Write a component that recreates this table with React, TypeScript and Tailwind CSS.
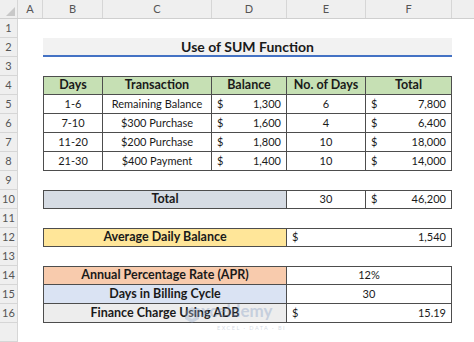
import React from "react";

type Cell = {
  text?: string;
  dollar?: string;
  w: number;
  bold?: boolean;
  bg?: string;
};

const font = { fontFamily: "Lato, 'Liberation Sans', sans-serif" };

const RowNum = ({ n }: { n?: number }) => (
  <div className="w-[18px] shrink-0 bg-[#efefef] border-r border-b border-[#d6d6d6] flex items-center justify-center text-[11px] text-[#555]">
    {n}
  </div>
);

const TableCell = ({ cell, first, top }: { cell: Cell; first?: boolean; top?: boolean }) => (
  <div
    className={`shrink-0 h-full flex items-center border-r border-b border-[#4d4d4d] text-[#1a1a1a] ${
      first ? "border-l" : ""
    } ${top ? "border-t" : ""} ${cell.bold ? "font-bold text-[12.5px]" : "text-[11px]"} ${
      cell.dollar ? "justify-between px-[5px]" : "justify-center"
    } ${cell.bg ?? "bg-white"}`}
    style={{ width: cell.w }}
  >
    {cell.dollar ? (
      <>
        <span>$</span>
        <span>{cell.dollar}</span>
      </>
    ) : (
      <span>{cell.text}</span>
    )}
  </div>
);

const Row = ({ n, cells, top }: { n?: number; cells?: Cell[]; top?: boolean }) => (
  <div className="flex h-[19px]">
    <RowNum n={n} />
    <div className="w-[25px] shrink-0" />
    {cells?.map((c, i) => (
      <TableCell key={i} cell={c} first={i === 0} top={top} />
    ))}
  </div>
);

const green = "bg-[#c6e0b4]";

const data = [
  ["1-6", "Remaining Balance", "1,300", "6", "7,800"],
  ["7-10", "$300 Purchase", "1,600", "4", "6,400"],
  ["11-20", "$200 Purchase", "1,800", "10", "18,000"],
  ["21-30", "$400 Payment", "1,400", "10", "14,000"],
];

const summary = [
  { label: "Annual Percentage Rate (APR)", bg: "bg-[#f8cbad]", value: { text: "12%" } },
  { label: "Days in Billing Cycle", bg: "bg-[#dae3f3]", value: { text: "30" } },
  { label: "Finance Charge Using ADB", bg: "bg-[#ededed]", value: { dollar: "15.19" } },
];

export default function App() {
  const colHeads = [
    { l: "A", w: 25 },
    { l: "B", w: 60 },
    { l: "C", w: 109 },
    { l: "D", w: 75 },
    { l: "E", w: 79 },
    { l: "F", w: 86 },
  ];

  return (
    <div className="relative w-[474px] h-[342px] overflow-hidden bg-white" style={font}>
      {/* column headers */}
      <div className="flex h-[19px] bg-[#efefef] border-b border-[#cfcfcf] text-[11px] text-[#555]">
        <div className="w-[18px] shrink-0 border-r border-[#d6d6d6] relative">
          <svg className="absolute right-[2px] bottom-[2px]" width="9" height="9" viewBox="0 0 9 9">
            <polygon points="9,0 9,9 0,9" fill="#c8c8c8" />
          </svg>
        </div>
        {colHeads.map((c) => (
          <div
            key={c.l}
            className="shrink-0 border-r border-[#d6d6d6] flex items-center justify-center"
            style={{ width: c.w }}
          >
            {c.l}
          </div>
        ))}
        <div className="flex-1" />
      </div>

      <Row n={1} />
      {/* title */}
      <div className="flex h-[19px]">
        <RowNum n={2} />
        <div className="w-[25px] shrink-0" />
        <div className="w-[409px] shrink-0 bg-[#f2f2f2] border-b-2 border-[#4472c4] flex items-center justify-center text-[14px] font-bold text-[#1a1a1a]">
          Use of SUM Function
        </div>
      </div>
      <Row n={3} />
      <Row
        n={4}
        top
        cells={[
          { text: "Days", w: 60, bold: true, bg: green },
          { text: "Transaction", w: 109, bold: true, bg: green },
          { text: "Balance", w: 75, bold: true, bg: green },
          { text: "No. of Days", w: 79, bold: true, bg: green },
          { text: "Total", w: 86, bold: true, bg: green },
        ]}
      />
      {data.map((d, i) => (
        <Row
          key={i}
          n={5 + i}
          cells={[
            { text: d[0], w: 60 },
            { text: d[1], w: 109 },
            { dollar: d[2], w: 75 },
            { text: d[3], w: 79 },
            { dollar: d[4], w: 86 },
          ]}
        />
      ))}
      <Row n={9} />
      <Row
        n={10}
        top
        cells={[
          { text: "Total", w: 244, bold: true, bg: "bg-[#d6dce4]" },
          { text: "30", w: 79 },
          { dollar: "46,200", w: 86 },
        ]}
      />
      <Row n={11} />
      <Row
        n={12}
        top
        cells={[
          { text: "Average Daily Balance", w: 244, bold: true, bg: "bg-[#ffe699]" },
          { dollar: "1,540", w: 165 },
        ]}
      />
      <Row n={13} />
      {summary.map((s, i) => (
        <Row
          key={s.label}
          n={14 + i}
          top={i === 0}
          cells={[
            { text: s.label, w: 244, bold: true, bg: s.bg },
            { ...s.value, w: 165 },
          ]}
        />
      ))}
      <Row />

      {/* watermark */}
      <div className="absolute left-[184px] top-[301px] w-[104px] h-[32px] opacity-35 pointer-events-none">
        <svg className="absolute left-0 top-[6px]" width="16" height="16" viewBox="0 0 16 16">
          <polygon points="8,0 15,4 15,12 8,16 1,12 1,4" fill="#8ea4c8" />
          <polygon points="8,4 11.5,6 11.5,10 8,12 4.5,10 4.5,6" fill="#d4dced" />
        </svg>
        <span className="absolute left-[8px] top-0 text-[17px] leading-[20px] font-bold text-[#7f98c2]">
          exceldemy
        </span>
        <span className="absolute left-[33px] top-[24px] text-[5.5px] leading-[7px] text-[#8a9ab5] tracking-[1.5px] whitespace-nowrap">
          EXCEL · DATA · BI
        </span>
      </div>
    </div>
  );
}
